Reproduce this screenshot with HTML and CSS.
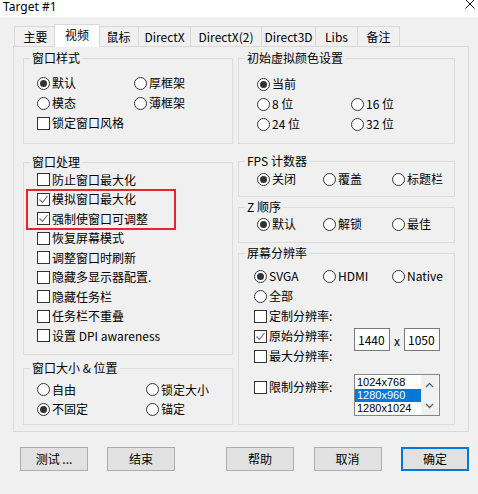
FILE: index.html
```html
<!DOCTYPE html>
<html lang="zh-CN">
<head>
<meta charset="utf-8">
<title>Target #1</title>
<link rel="stylesheet" href="styles.css">
</head>
<body>
<div class="titlebar">
  <span class="title">Target #1</span>
  <svg class="close" width="10" height="9" viewBox="0 0 10 9"><path d="M0.5 -0.5 L9.5 8.5 M9.5 -0.5 L0.5 8.5" stroke="#111" stroke-width="1" fill="none"/></svg>
</div>
<div class="main">
  <div class="tabs">
    <div class="tab">主要</div>
    <div class="tab active">视频</div>
    <div class="tab t-mouse">鼠标</div>
    <div class="tab t-dx">DirectX</div>
    <div class="tab t-dx2">DirectX(2)</div>
    <div class="tab t-d3d">Direct3D</div>
    <div class="tab">Libs</div>
    <div class="tab">备注</div>
  </div>
  <div class="panel">
    <div class="col col-left">
      <fieldset class="group g-style">
        <legend>窗口样式</legend>
        <div class="opts">
          <label class="opt"><span class="radio on"></span>默认</label>
          <label class="opt"><span class="radio"></span>厚框架</label>
          <label class="opt"><span class="radio"></span>模态</label>
          <label class="opt"><span class="radio"></span>薄框架</label>
          <label class="opt wide"><span class="check"></span>锁定窗口风格</label>
        </div>
      </fieldset>
      <fieldset class="group g-proc">
        <legend>窗口处理</legend>
        <div class="opts">
          <label class="opt"><span class="check"></span>防止窗口最大化</label>
          <div class="hl">
            <label class="opt"><span class="check on"><svg width="11" height="11" viewBox="0 0 11 11"><polyline points="1.5,5.5 4.5,8.5 9.5,2" fill="none" stroke="#6e6e6e" stroke-width="1.1"/></svg></span>模拟窗口最大化</label>
            <label class="opt"><span class="check on"><svg width="11" height="11" viewBox="0 0 11 11"><polyline points="1.5,5.5 4.5,8.5 9.5,2" fill="none" stroke="#6e6e6e" stroke-width="1.1"/></svg></span>强制使窗口可调整</label>
          </div>
          <label class="opt"><span class="check"></span>恢复屏幕模式</label>
          <label class="opt"><span class="check"></span>调整窗口时刷新</label>
          <label class="opt"><span class="check"></span>隐藏多显示器配置.</label>
          <label class="opt"><span class="check"></span>隐藏任务栏</label>
          <label class="opt"><span class="check"></span>任务栏不重叠</label>
          <label class="opt"><span class="check"></span>设置 DPI awareness</label>
        </div>
      </fieldset>
      <fieldset class="group g-size">
        <legend>窗口大小 &amp; 位置</legend>
        <div class="opts">
          <label class="opt"><span class="radio"></span>自由</label>
          <label class="opt"><span class="radio"></span>锁定大小</label>
          <label class="opt"><span class="radio on"></span>不固定</label>
          <label class="opt"><span class="radio"></span>锚定</label>
        </div>
      </fieldset>
    </div>
    <div class="col col-right">
      <fieldset class="group g-color">
        <legend>初始虚拟颜色设置</legend>
        <div class="opts">
          <label class="opt wide"><span class="radio on"></span>当前</label>
          <label class="opt"><span class="radio"></span>8 位</label>
          <label class="opt"><span class="radio"></span>16 位</label>
          <label class="opt"><span class="radio"></span>24 位</label>
          <label class="opt"><span class="radio"></span>32 位</label>
        </div>
      </fieldset>
      <fieldset class="group g-fps">
        <legend>FPS 计数器</legend>
        <div class="opts">
          <label class="opt"><span class="radio on"></span>关闭</label>
          <label class="opt"><span class="radio"></span>覆盖</label>
          <label class="opt"><span class="radio"></span>标题栏</label>
        </div>
      </fieldset>
      <fieldset class="group g-z">
        <legend>Z 顺序</legend>
        <div class="opts">
          <label class="opt"><span class="radio on"></span>默认</label>
          <label class="opt"><span class="radio"></span>解锁</label>
          <label class="opt"><span class="radio"></span>最佳</label>
        </div>
      </fieldset>
      <fieldset class="group g-res">
        <legend>屏幕分辨率</legend>
        <div class="res">
          <div class="opts three">
            <label class="opt"><span class="radio on"></span>SVGA</label>
            <label class="opt"><span class="radio"></span>HDMI</label>
            <label class="opt"><span class="radio"></span>Native</label>
            <label class="opt wide"><span class="radio"></span>全部</label>
            <label class="opt wide"><span class="check"></span>定制分辨率:</label>
          </div>
          <div class="pair">
            <div class="pair-labels">
              <label class="opt"><span class="check on"><svg width="11" height="11" viewBox="0 0 11 11"><polyline points="1.5,5.5 4.5,8.5 9.5,2" fill="none" stroke="#6e6e6e" stroke-width="1.1"/></svg></span>原始分辨率:</label>
              <label class="opt"><span class="check"></span>最大分辨率:</label>
            </div>
            <div class="size-inputs">
              <span class="field">1440</span>
              <span class="times">x</span>
              <span class="field">1050</span>
            </div>
          </div>
          <div class="pair limit">
            <label class="opt limit-label"><span class="check"></span>限制分辨率:</label>
            <div class="listbox">
              <div class="items">
                <div class="item">1024x768</div>
                <div class="item sel">1280x960</div>
                <div class="item">1280x1024</div>
              </div>
              <div class="scroll">
                <svg width="9" height="6" viewBox="0 0 9 6"><polyline points="1,5 4.5,1.5 8,5" fill="none" stroke="#606060" stroke-width="1.3"/></svg>
                <svg width="9" height="6" viewBox="0 0 9 6"><polyline points="1,1 4.5,4.5 8,1" fill="none" stroke="#606060" stroke-width="1.3"/></svg>
              </div>
            </div>
          </div>
        </div>
      </fieldset>
    </div>
  </div>
  <div class="buttons">
    <div class="btn-group">
      <button class="btn">测试 ...</button>
      <button class="btn">结束</button>
    </div>
    <div class="btn-group">
      <button class="btn">帮助</button>
      <button class="btn">取消</button>
      <button class="btn default">确定</button>
    </div>
  </div>
</div>
</body>
</html>
```
FILE: styles.css
```css
html, body {
  margin: 0;
  padding: 0;
}
body {
  width: 478px;
  height: 494px;
  overflow: hidden;
  background: #f0f0f0;
  color: #000;
  font: 12px/1.2 "Noto Sans CJK SC", "Noto Sans", sans-serif;
}

/* title bar */
.titlebar {
  height: 17px;
  background: #fff;
  display: flex;
  justify-content: space-between;
  align-items: flex-start;
  overflow: hidden;
}
.title {
  font: 12px/14px "Noto Sans", "Noto Sans CJK SC", sans-serif;
  margin: 0 0 0 3px;
  color: #000;
}
.close {
  margin-right: 3px;
  display: block;
}

.main {
  padding: 7px 10px 0 13px;
}

/* tabs */
.tabs {
  display: flex;
  align-items: flex-end;
  height: 22px;
  padding-left: 1px;
  position: relative;
  z-index: 1;
}
.tab {
  height: 20px;
  width: 43px;
  box-sizing: border-box;
  padding: 0;
  margin-left: -1px;
  border: 1px solid #d9d9d9;
  border-bottom: none;
  background: #f0f0f0;
  line-height: 19px;
  text-align: center;
  white-space: nowrap;
}
.tabs .tab:first-child { margin-left: 0; }
.tab.t-mouse { width: 41px; }
.tab.t-dx { width: 53px; }
.tab.t-dx2 { width: 72px; }
.tab.t-d3d { width: 55px; }
.tab.active {
  height: 23px;
  width: 46px;
  background: #fff;
  margin: 0 -1px -1px -3px;
  line-height: 20px;
  position: relative;
  z-index: 2;
}

/* panel */
.panel {
  border: 1px solid #d9d9d9;
  padding: 3px 13px 6px 9px;
  display: flex;
  gap: 5px;
  width: 456px;
  box-sizing: border-box;
}
.col {
  display: flex;
  flex-direction: column;
}
.col-left { width: 210px; }
.col-right { width: 217px; }

fieldset.group {
  margin: 0;
  padding: 0;
  min-width: 0;
  border: 1px solid #dcdcdc;
  box-sizing: border-box;
}
fieldset.group legend {
  margin-left: 6px;
  padding: 0 2px;
  height: 16px;
  line-height: 16px;
}

.opts {
  display: grid;
}
.opt {
  display: flex;
  align-items: center;
  gap: 2px;
  height: 20px;
  white-space: nowrap;
}
.opt.wide { grid-column: 1 / -1; }

.radio, .check {
  width: 13px;
  height: 13px;
  box-sizing: border-box;
  border: 1px solid #333;
  background: #fff;
  flex: none;
  display: flex;
  align-items: center;
  justify-content: center;
}
.radio { border-radius: 50%; }
.radio.on::after {
  content: "";
  width: 7px;
  height: 7px;
  border-radius: 50%;
  background: #333;
}
.check svg { display: block; }

/* left column */
fieldset.g-style { height: 94px; }
.g-style .opts {
  padding: 7px 0 0 13px;
  grid-template-columns: 97px auto;
}
fieldset.g-proc { height: 201px; margin-top: 10px; }
.g-proc .opts { padding-left: 13px; }
.g-proc .opt { height: 19.5px; }
.hl { position: relative; }
.hl::after {
  content: "";
  position: absolute;
  left: -11px;
  top: -1px;
  width: 150px;
  height: 41px;
  border: 2px solid #e8242d;
  box-sizing: border-box;
  pointer-events: none;
}
fieldset.g-size { height: 65px; margin-top: 5px; }
.g-size .opts {
  padding: 4px 0 0 13px;
  grid-template-columns: 109px auto;
}
.g-size .opt { height: 19.5px; }

/* right column */
fieldset.g-color { height: 94px; }
.g-color .opts {
  padding: 8px 0 0 18px;
  grid-template-columns: 94px auto;
}
fieldset.g-fps { height: 44px; margin-top: 9px; }
fieldset.g-z { height: 44px; margin-top: 2px; }
.g-fps .opts, .g-z .opts {
  padding: 1px 0 0 18px;
  grid-template-columns: 66px 69px auto;
}
.g-z .opts { padding-top: 0; }
.g-fps .opt, .g-z .opt { height: 19px; }

fieldset.g-res { height: 180px; margin-top: 2px; }
.res { padding: 5px 0 0 15px; }
.opts.three { grid-template-columns: 69px 69px auto; }
.pair {
  display: grid;
  grid-template-columns: 100px auto;
}
.size-inputs {
  display: flex;
  align-items: center;
  margin-top: 2px;
  align-self: start;
}
.field {
  width: 36px;
  height: 23px;
  box-sizing: border-box;
  border: 1px solid #7a7a7a;
  background: #fff;
  padding-left: 3px;
  line-height: 21px;
}
.times {
  width: 14px;
  text-align: center;
  padding-top: 3px;
}
.pair.limit { margin-top: 8px; }
.limit-label { margin-top: 3px; }
.listbox {
  width: 86px;
  height: 42px;
  box-sizing: border-box;
  border: 1px solid #828790;
  background: #fff;
  display: flex;
  padding: 0 1px 0 0;
  overflow: hidden;
}
.items {
  width: 66px;
  padding-top: 1px;
  font: 11px/13px "Liberation Sans", "Noto Sans", sans-serif;
}
.item {
  height: 13px;
  line-height: 13px;
  padding-left: 2px;
  white-space: nowrap;
}
.item.sel {
  background: #0078d7;
  color: #fff;
}
.scroll {
  width: 17px;
  background: #f0f0f0;
  display: flex;
  flex-direction: column;
  justify-content: space-between;
  align-items: center;
  padding: 7px 0 6px;
  box-sizing: border-box;
}
.scroll svg { display: block; }

/* buttons */
.buttons {
  display: flex;
  justify-content: space-between;
  margin: 15px -1px 0 7px;
}
.btn-group {
  display: flex;
  gap: 19.5px;
}
.btn-group:first-child { gap: 19px; }
.btn {
  width: 68px;
  height: 24px;
  box-sizing: border-box;
  border: 1px solid #adadad;
  background: #e1e1e1;
  font: 12px/1 "Noto Sans CJK SC", "Noto Sans", sans-serif;
  color: #000;
  padding: 0;
  margin: 0;
  display: flex;
  align-items: center;
  justify-content: center;
}
.btn.default { border: 2px solid #0078d7; }
```
